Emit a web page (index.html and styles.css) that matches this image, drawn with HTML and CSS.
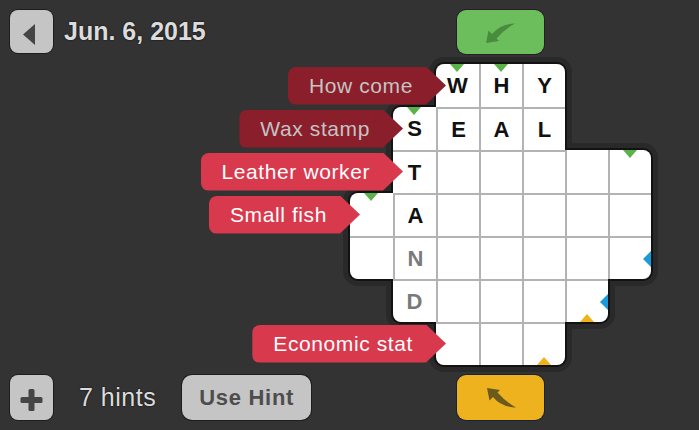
FILE: index.html
```html
<!DOCTYPE html>
<html>
<head>
<meta charset="utf-8">
<title>Crossword</title>
<link rel="stylesheet" href="styles.css">
</head>
<body>
<div class="page">
  <div class="top-left">
    <button class="sq-btn back" aria-label="Back">
      <svg width="43" height="43" viewBox="0 0 43 43"><path d="M13 24.5 L25 14 L25 35 Z" fill="#454545"/></svg>
    </button>
    <span class="date">Jun. 6, 2015</span>
  </div>
  <button class="nav-btn green" aria-label="Previous">
    <svg width="87" height="44" viewBox="0 0 87 44"><path d="M29 33 L31.5 20.5 L35 24 Q43 14 58 13.5 Q48 19 39.5 28.5 L42 31 Z" fill="#4a8c3d"/></svg>
  </button>

  <div class="band r1"></div>
  <div class="band r2"></div>
  <div class="band r3"></div>
  <div class="band r4"></div>
  <div class="band r5"></div>
  <div class="band r6"></div>
  <div class="band r7"></div>

  <div class="ring r1"></div>
  <div class="ring r2"></div>
  <div class="ring r3"></div>
  <div class="ring r4"></div>
  <div class="ring r5"></div>
  <div class="ring r6"></div>
  <div class="ring r7"></div>

  <div class="row r1">
    <div class="cell open g">W</div><div class="cell open g">H</div><div class="cell open">Y</div>
  </div>
  <div class="row r2">
    <div class="cell open g">S</div><div class="cell">E</div><div class="cell">A</div><div class="cell">L</div>
  </div>
  <div class="row r3">
    <div class="cell">T</div><div class="cell"></div><div class="cell"></div><div class="cell"></div><div class="cell open"></div><div class="cell open g"></div>
  </div>
  <div class="row r4">
    <div class="cell open g"></div><div class="cell">A</div><div class="cell"></div><div class="cell"></div><div class="cell"></div><div class="cell"></div><div class="cell"></div>
  </div>
  <div class="row r5">
    <div class="cell"></div><div class="cell hint">N</div><div class="cell"></div><div class="cell"></div><div class="cell"></div><div class="cell"></div><div class="cell b"></div>
  </div>
  <div class="row r6">
    <div class="cell hint">D</div><div class="cell"></div><div class="cell"></div><div class="cell"></div><div class="cell y b"></div>
  </div>
  <div class="row r7">
    <div class="cell"></div><div class="cell"></div><div class="cell y"></div>
  </div>

  <div class="clue past c1">How come</div>
  <div class="clue past c2">Wax stamp</div>
  <div class="clue active c3">Leather worker</div>
  <div class="clue active c4">Small fish</div>
  <div class="clue active c5">Economic stat</div>

  <div class="bottom-left">
    <button class="sq-btn plus" aria-label="Add hints">
      <svg width="43" height="45" viewBox="0 0 43 45"><rect x="10.5" y="22" width="22" height="6" rx="1.5" fill="#454545"/><rect x="18.5" y="14" width="6" height="22" rx="1.5" fill="#454545"/></svg>
    </button>
    <span class="hints">7 hints</span>
    <button class="use-hint">Use Hint</button>
  </div>
  <button class="nav-btn yellow" aria-label="Next">
    <svg width="87" height="45" viewBox="0 0 87 45"><g transform="translate(1,46) scale(1,-1)"><path d="M29 33 L31.5 20.5 L35 24 Q43 14 58 13.5 Q48 19 39.5 28.5 L42 31 Z" fill="#6b5a1c"/></g></svg>
  </button>
</div>
</body>
</html>
```
FILE: styles.css
```css
* { box-sizing: border-box; }
html, body { margin: 0; padding: 0; }
body {
  background: #333333;
  width: 699px;
  height: 430px;
  overflow: hidden;
  font-family: "Liberation Sans", Arial, sans-serif;
}
button { font-family: inherit; padding: 0; margin: 0; border: 0; cursor: pointer; }
svg { display: block; }

.page {
  display: grid;
  grid-template-columns: 350px repeat(7, 43px) 48px;
  grid-template-rows: 64px repeat(7, 43px) 65px;
  width: 699px;
  height: 430px;
}

/* header */
.top-left {
  grid-row: 1;
  grid-column: 1;
  align-self: start;
  display: flex;
  align-items: center;
  gap: 11px;
  padding: 10px 0 0 10px;
}
.sq-btn {
  width: 43px;
  height: 43px;
  background: #c5c5c5;
  border-radius: 8px;
  box-shadow: 0 0 0 1px #1d1d1d;
}
.sq-btn.plus { height: 45px; }
.date {
  font-size: 25px;
  font-weight: bold;
  color: #dcdcdc;
  text-shadow: 0 0 2px rgba(0,0,0,0.9);
}
.nav-btn {
  width: 87px;
  height: 44px;
  justify-self: center;
  align-self: start;
  margin-top: 10px;
  border-radius: 9px;
}
.nav-btn.green {
  grid-row: 1;
  grid-column: 4 / 7;
  background: #6cbd5b;
  box-shadow: 0 0 0 1px #2b1c2c;
}
.nav-btn.yellow {
  grid-row: 9;
  grid-column: 4 / 7;
  height: 45px;
  background: #efb21f;
  box-shadow: 0 0 0 1px #1a2236;
}

/* grid rows */
.r1 { grid-row: 2; grid-column: 4 / 7; border-radius: 8px 8px 0 0; }
.r2 { grid-row: 3; grid-column: 3 / 7; border-radius: 8px 0 0 0; }
.r3 { grid-row: 4; grid-column: 3 / 9; border-radius: 0 8px 0 0; }
.r4 { grid-row: 5; grid-column: 2 / 9; border-radius: 8px 0 0 0; }
.r5 { grid-row: 6; grid-column: 2 / 9; border-radius: 0 0 8px 8px; }
.r6 { grid-row: 7; grid-column: 3 / 8; border-radius: 0 0 8px 8px; }
.r7 { grid-row: 8; grid-column: 4 / 7; border-radius: 0 0 8px 8px; }

.band { box-shadow: 0 0 0 7px #292929; }
.ring { box-shadow: 0 0 0 2px #121212; }
.row {
  background: #ffffff;
  display: flex;
}
.cell {
  flex: 0 0 43px;
  height: 43px;
  border-left: 2px solid #b3b3b3;
  border-top: 2px solid #b3b3b3;
  display: flex;
  align-items: center;
  justify-content: center;
  font-size: 22px;
  font-weight: bold;
  color: #111111;
  position: relative;
}
.cell:first-child { border-left: 0; }
.cell.open { border-top: 0; }
.cell.hint { color: #7a7a7a; }

.g::before {
  content: "";
  position: absolute;
  top: 0;
  left: 50%;
  margin-left: -7.5px;
  border-left: 7.5px solid transparent;
  border-right: 7.5px solid transparent;
  border-top: 8px solid #5cb24a;
}
.y::before {
  content: "";
  position: absolute;
  bottom: 0;
  left: 50%;
  margin-left: -7.5px;
  border-left: 7.5px solid transparent;
  border-right: 7.5px solid transparent;
  border-bottom: 8px solid #efb11c;
}
.b::after {
  content: "";
  position: absolute;
  right: 0;
  top: 50%;
  margin-top: -8px;
  border-top: 8px solid transparent;
  border-bottom: 8px solid transparent;
  border-right: 8px solid #1b9ad7;
}

/* clue labels */
.clue {
  position: relative;
  z-index: 3;
  justify-self: end;
  align-self: center;
  margin-right: -10px;
  height: 38px;
  display: flex;
  align-items: center;
  padding: 0 33px 0 21px;
  font-size: 21px;
  letter-spacing: 0.6px;
  white-space: nowrap;
  border-radius: 8px;
  clip-path: polygon(0 0, calc(100% - 20px) 0, 100% 50%, calc(100% - 20px) 100%, 0 100%);
}
.clue.past { background: #8a1e2b; color: #c4c4c4; }
.clue.active { background: #d9394d; color: #ffffff; }
.c1 { grid-row: 2; grid-column: 1 / 4; }
.c2 { grid-row: 3; grid-column: 1 / 3; }
.c3 { grid-row: 4; grid-column: 1 / 3; }
.c4 { grid-row: 5; grid-column: 1 / 2; }
.c5 { grid-row: 8; grid-column: 1 / 4; }

/* footer */
.bottom-left {
  grid-row: 9;
  grid-column: 1;
  align-self: start;
  display: flex;
  align-items: center;
  padding: 10px 0 0 10px;
}
.hints {
  margin-left: 26px;
  font-size: 25px;
  letter-spacing: 0.5px;
  color: #dcdcdc;
  text-shadow: 0 0 2px rgba(0,0,0,0.8);
}
.use-hint {
  margin-left: 26px;
  width: 129px;
  height: 45px;
  border-radius: 10px;
  background: #c5c5c5;
  box-shadow: 0 0 0 1px #1d1d1d;
  color: #4d4d4d;
  font-size: 22px;
  font-weight: bold;
  letter-spacing: 0.7px;
}
```
